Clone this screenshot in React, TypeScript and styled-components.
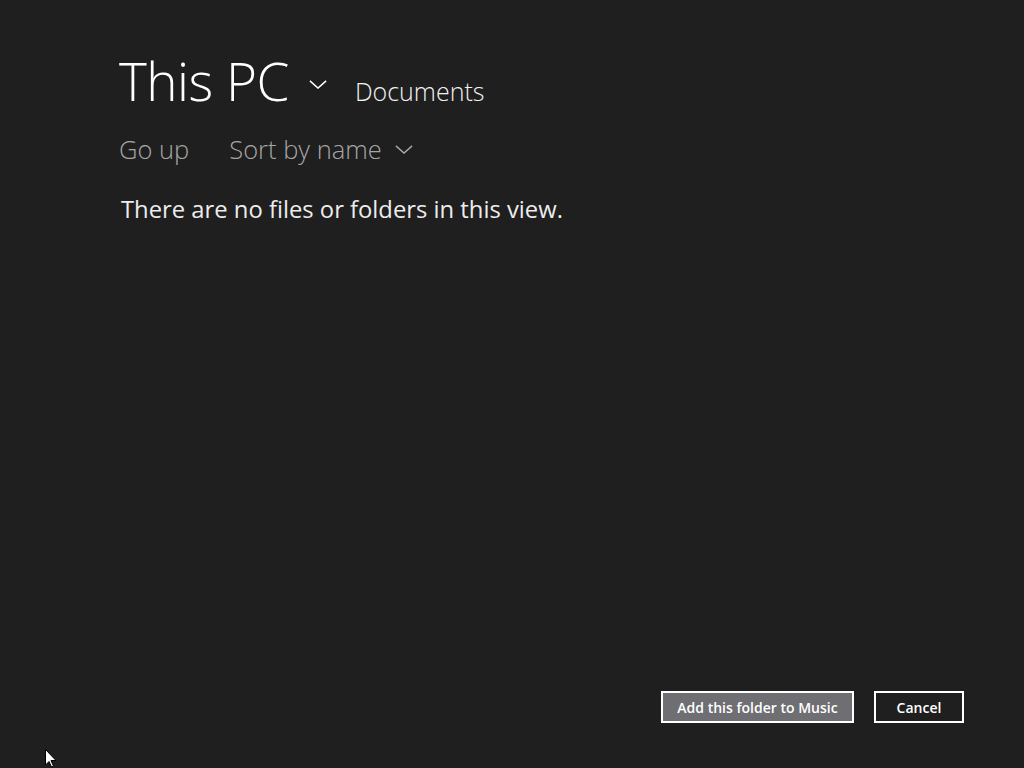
import React from 'react';
import styled, { createGlobalStyle } from 'styled-components';

const GlobalStyle = createGlobalStyle`
  html, body {
    margin: 0;
    padding: 0;
    background: #1f1f1f;
  }
  body {
    font-family: 'Open Sans', 'Noto Sans', sans-serif;
  }
`;

const Page = styled.div`
  position: relative;
  width: 1024px;
  height: 768px;
  background: #1f1f1f;
  display: flex;
  flex-direction: column;
  box-sizing: border-box;
  padding: 43px 60px 45px 119px;
  overflow: hidden;
`;

const TitleRow = styled.div`
  display: flex;
  align-items: baseline;
  color: #ffffff;
`;

const Title = styled.h1`
  margin: 0;
  font-size: 53px;
  font-weight: 300;
  line-height: 76px;
  letter-spacing: -0.5px;
`;

const Chevron = styled.svg<{ $size: number }>`
  width: ${(p) => p.$size}px;
  height: ${(p) => p.$size / 2}px;
  flex: none;
`;

const TitleChevron = styled.span`
  margin: 0 28px 0 20px;
  align-self: center;
  display: flex;
  padding-top: 6px;
`;

const Crumb = styled.span`
  font-size: 25px;
  font-weight: 300;
  color: #f2f2f2;
`;

const Toolbar = styled.div`
  display: flex;
  align-items: center;
  gap: 40px;
  margin-top: 10px;
  height: 40px;
`;

const ToolItem = styled.span`
  display: flex;
  align-items: center;
  gap: 13px;
  font-size: 25.5px;
  font-weight: 300;
  color: #a6a6a6;
`;

const EmptyText = styled.p`
  margin: 24px 0 0 2px;
  font-size: 23.8px;
  font-weight: 400;
  color: #ededed;
`;

const Footer = styled.div`
  margin-top: auto;
  display: flex;
  justify-content: flex-end;
  gap: 20px;
`;

const Button = styled.button<{ $primary?: boolean }>`
  height: 32px;
  box-sizing: border-box;
  border: 2px solid #ffffff;
  background: ${(p) => (p.$primary ? '#6e6e73' : '#1f1f1f')};
  color: #ffffff;
  font-family: 'Open Sans', 'Noto Sans', sans-serif;
  font-size: 14px;
  font-weight: 600;
  padding: 0 12px;
  min-width: ${(p) => (p.$primary ? '193px' : '90px')};
  cursor: pointer;
`;

const Cursor = styled.svg`
  position: absolute;
  left: 45px;
  top: 749px;
  width: 12px;
  height: 19px;
`;

const Chev = ({ size, color }: { size: number; color: string }) => (
  <Chevron $size={size} viewBox="0 0 20 10">
    <polyline points="1,1 10,9 19,1" fill="none" stroke={color} strokeWidth="1.6" />
  </Chevron>
);

const App = () => {
  return (
    <>
      <GlobalStyle />
      <Page>
        <TitleRow>
          <Title>This PC</Title>
          <TitleChevron>
            <Chev size={18} color="#ffffff" />
          </TitleChevron>
          <Crumb>Documents</Crumb>
        </TitleRow>
        <Toolbar>
          <ToolItem>Go up</ToolItem>
          <ToolItem>
            Sort by name
            <Chev size={18} color="#a6a6a6" />
          </ToolItem>
        </Toolbar>
        <EmptyText>There are no files or folders in this view.</EmptyText>
        <Footer>
          <Button $primary>Add this folder to Music</Button>
          <Button>Cancel</Button>
        </Footer>
        <Cursor viewBox="0 0 12 19">
          <path d="M0.5,0.5 L0.5,16 L4,12.5 L6.5,18 L8.5,17 L6,11.5 L11,11.5 Z" fill="#ffffff" stroke="#000000" strokeWidth="1" />
        </Cursor>
      </Page>
    </>
  );
};

export default App;
